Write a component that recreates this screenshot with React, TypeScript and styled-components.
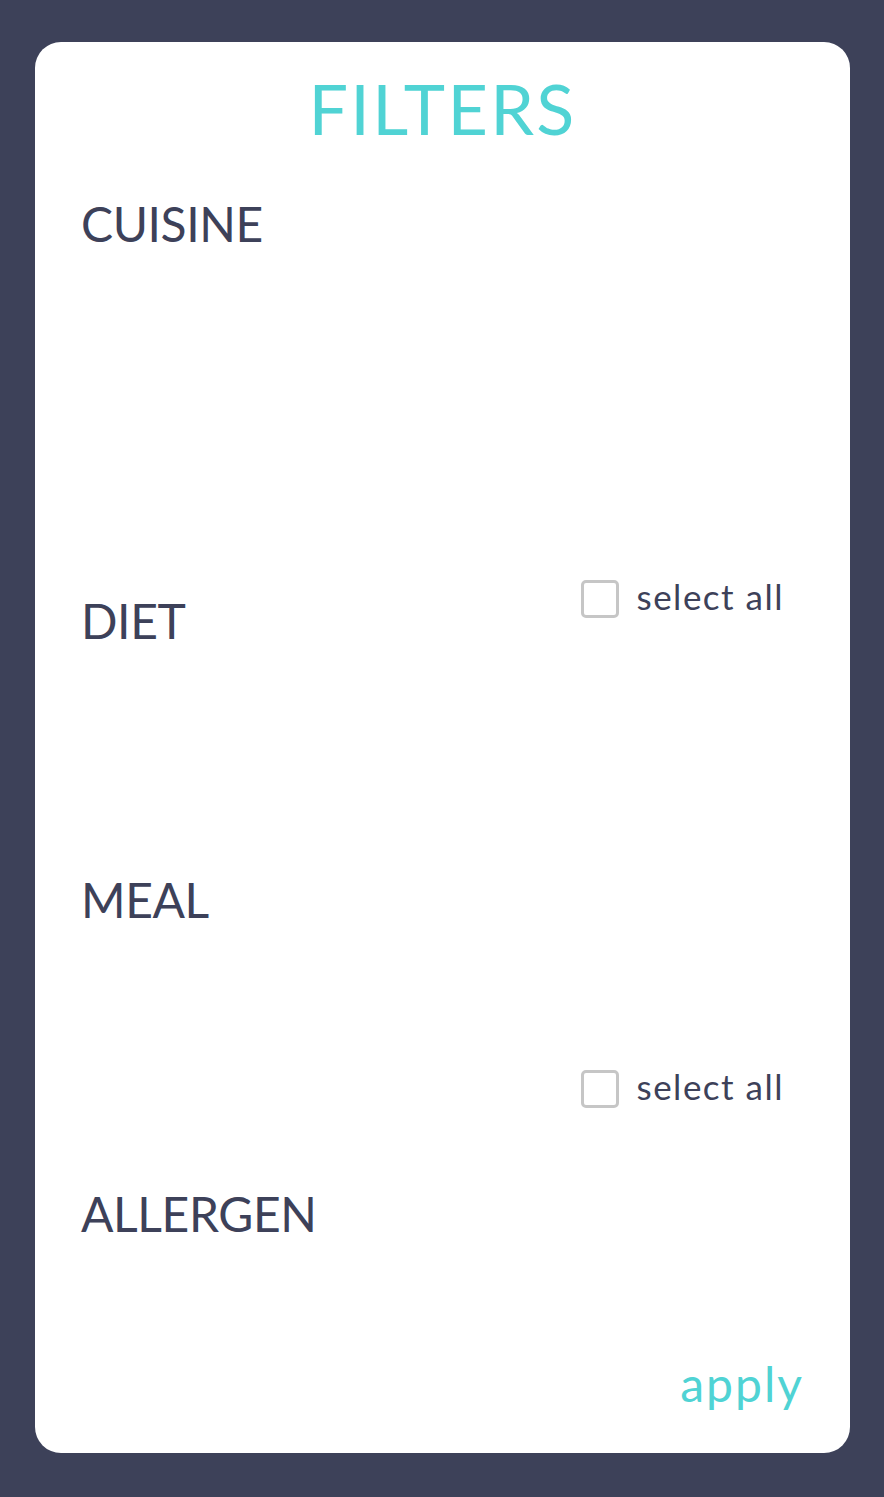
import React from "react";
import styled, { createGlobalStyle } from "styled-components";

const GlobalStyle = createGlobalStyle`
    html, body {
        margin: 0;
        padding: 0;
        background-color: #3d4159;
    }

    * {
        box-sizing: border-box;
    }
`;

const Page = styled.div`
    padding: 42px 34px 44px 35px;
    font-family: Lato, "Noto Sans", sans-serif;
    color: #3d4159;
`;

const Card = styled.form`
    display: flex;
    flex-direction: column;

    height: 1411px;
    padding: 31px 46px 45px 46px;

    border-radius: 26px;
    background-color: #ffffff;
`;

const Title = styled.h1`
    margin: 0;

    font-size: 70px;
    line-height: 1;
    font-weight: 400;
    text-align: center;
    letter-spacing: 2.3px;
    color: #50d3d4;
`;

const Label = styled.h2<{ $offset?: number }>`
    margin: ${(p) => p.$offset ?? 0}px 0 0 0;

    font-size: 48px;
    line-height: 1;
    font-weight: 400;
    letter-spacing: -0.4px;
`;

const List = styled.ul<{ $height: number }>`
    height: ${(p) => p.$height}px;
    margin: 0;
    padding: 0;
    list-style: none;
`;

const HeaderRow = styled.div`
    display: flex;
    justify-content: space-between;
    align-items: flex-start;
`;

const ToggleRow = styled.div`
    display: flex;
    justify-content: flex-end;
`;

const SelectAll = styled.label`
    display: flex;
    align-items: flex-start;
    gap: 17px;

    margin-right: 20px;

    font-size: 35px;
    line-height: 32px;
    letter-spacing: 1.5px;
    cursor: pointer;
`;

const Box = styled.span`
    flex: none;
    width: 38px;
    height: 38px;

    border: 3px solid #c6c6c6;
    border-radius: 5px;
`;

const Apply = styled.button`
    align-self: flex-end;
    margin-top: auto;
    padding: 0;

    border: none;
    background: none;

    font-family: inherit;
    font-size: 48px;
    line-height: 1;
    letter-spacing: 2px;
    color: #50d3d4;
    cursor: pointer;
`;

function SelectAllToggle(): React.ReactElement {
    return (
        <SelectAll>
            <Box />
            <span>select all</span>
        </SelectAll>
    );
}

export default function App(): React.ReactElement {
    return (
        <Page>
            <GlobalStyle />
            <Card onSubmit={(e) => e.preventDefault()}>
                <Title>FILTERS</Title>

                <Label $offset={57}>CUISINE</Label>
                <List $height={332} />

                <HeaderRow>
                    <Label $offset={17}>DIET</Label>
                    <SelectAllToggle />
                </HeaderRow>
                <List $height={231} />

                <Label>MEAL</Label>
                <List $height={146} />

                <ToggleRow>
                    <SelectAllToggle />
                </ToggleRow>
                <List $height={82} />

                <Label>ALLERGEN</Label>

                <Apply type="submit">apply</Apply>
            </Card>
        </Page>
    );
}
